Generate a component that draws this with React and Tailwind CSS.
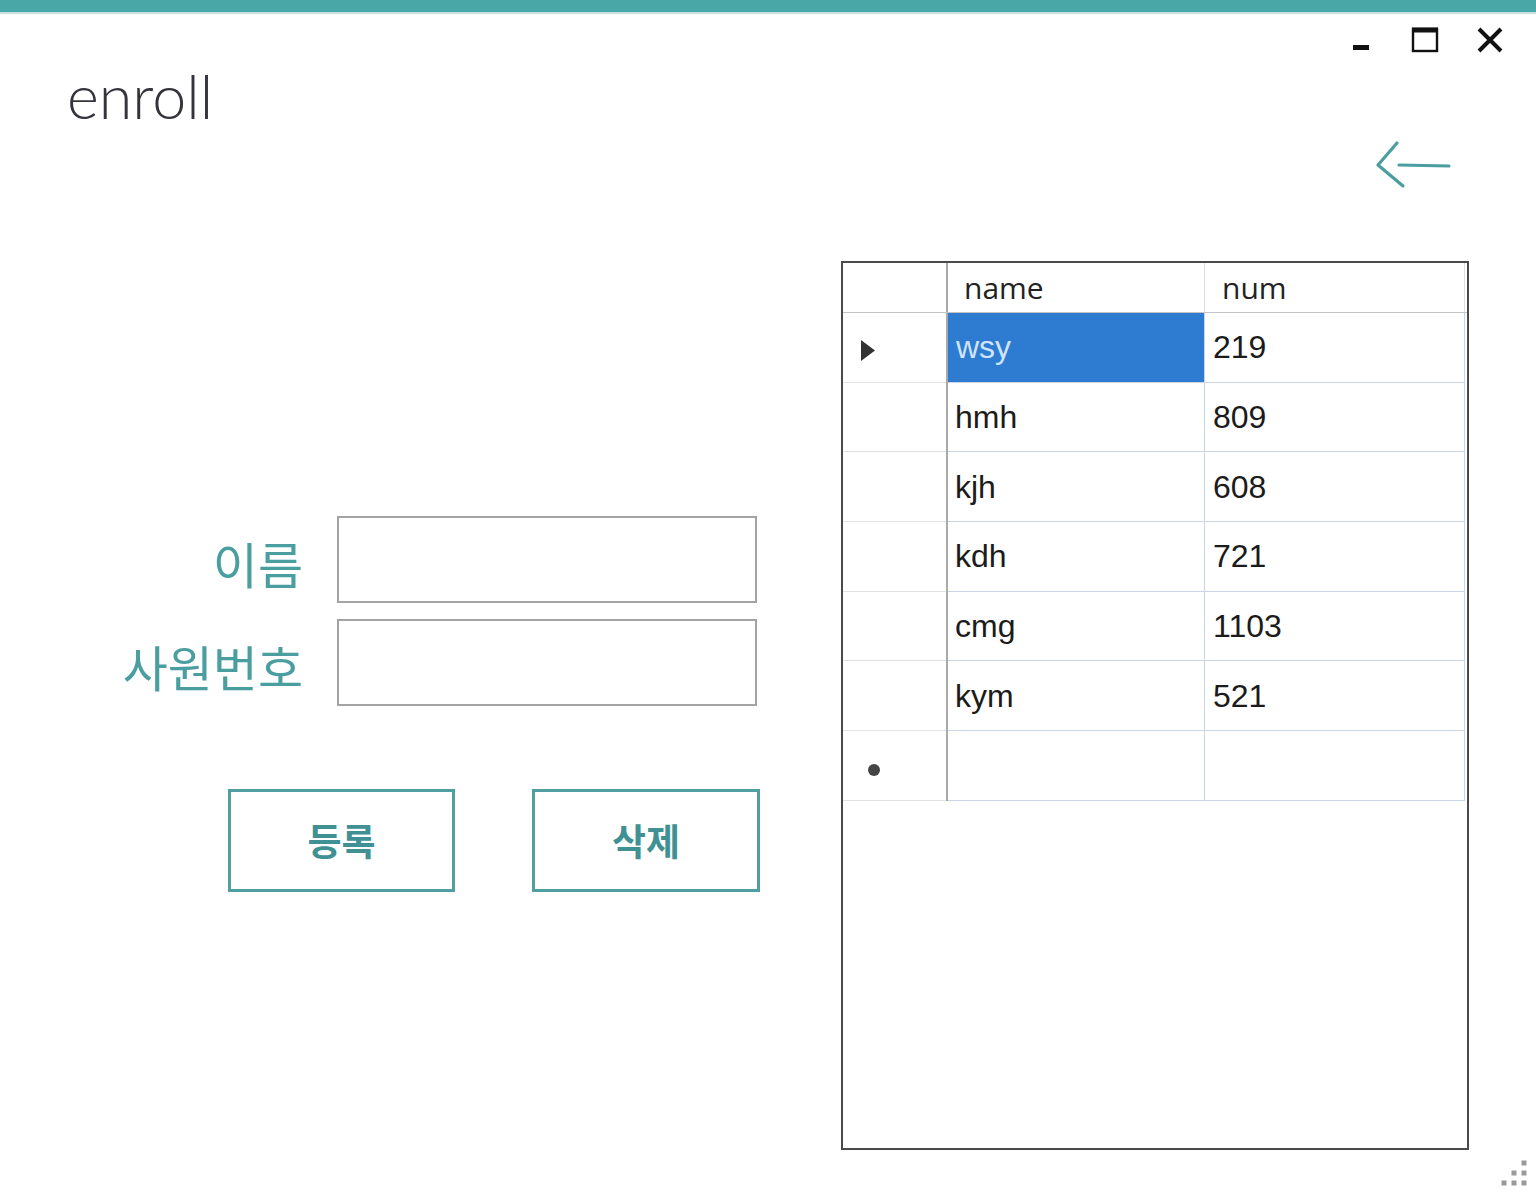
import React from "react";

const rows = [
  { name: "wsy", num: "219", selected: true },
  { name: "hmh", num: "809" },
  { name: "kjh", num: "608" },
  { name: "kdh", num: "721" },
  { name: "cmg", num: "1103" },
  { name: "kym", num: "521" },
  { name: "", num: "", isNew: true },
];

const cellFont = { fontFamily: '"Liberation Sans", Arial, sans-serif' };

function Row({ r }) {
  return (
    <div className="flex h-[69.7px] shrink-0">
      <div className="w-[103px] border-b border-[#e2e2e2] flex items-center pl-[18px]">
        {r.selected && (
          <svg width="14" height="21" viewBox="0 0 14 21" className="mt-[7px]">
            <polygon points="0,0 14,10.5 0,21" fill="#333" />
          </svg>
        )}
        {r.isNew && (
          <svg width="16" height="16" viewBox="0 0 16 16" className="ml-[5px] mt-[10px]">
            <circle cx="8" cy="8" r="6" fill="#444" />
          </svg>
        )}
      </div>
      <div className="w-[2px] bg-[#a9a9a9]" />
      <div className="w-[257px] border-r border-b border-[#c9d5e5] flex items-center">
        {r.selected ? (
          <div className="w-full h-full bg-[#2e7bd2] flex items-center pl-[8px] text-[32px] text-[#cfe4fb]" style={cellFont}>
            {r.name}
          </div>
        ) : (
          <span className="pl-[7px] text-[32px] text-[#1b1b1b]" style={cellFont}>
            {r.name}
          </span>
        )}
      </div>
      <div className="w-[260px] border-r border-b border-[#c9d5e5] flex items-center">
        <span className="pl-[8px] text-[32px] text-[#1b1b1b]" style={cellFont}>
          {r.num}
        </span>
      </div>
    </div>
  );
}

export default function App() {
  return (
    <div className="w-[1536px] h-[1198px] bg-white flex flex-col overflow-hidden">
      <div className="h-[12px] bg-[#4aa7a8] shrink-0" />
      <div className="h-[2px] bg-[#c5e3e3] shrink-0" />

      {/* header */}
      <div className="flex h-[247px] shrink-0">
        <div
          className="pl-[67px] mt-[51px] text-[61px] leading-none text-[#34343c] font-light"
          style={{ fontFamily: 'Lato, "Open Sans", sans-serif' }}
        >
          enroll
        </div>
        <div className="ml-auto flex flex-col items-end">
          <div className="flex mt-[12px] pr-[33px] gap-[36px]">
            <svg width="28" height="28" viewBox="0 0 28 28">
              <rect x="6" y="19" width="16" height="5" fill="#111" />
            </svg>
            <svg width="28" height="28" viewBox="0 0 28 28">
              <rect x="2" y="3" width="24" height="22" fill="none" stroke="#111" strokeWidth="2.4" />
              <rect x="1" y="1.5" width="26" height="5" fill="#111" />
            </svg>
            <svg width="28" height="28" viewBox="0 0 28 28">
              <path d="M4 3 L26 25 M26 3 L4 25" stroke="#111" strokeWidth="4" />
            </svg>
          </div>
          <svg width="86" height="54" viewBox="0 0 86 54" className="mt-[84px] mr-[80px]">
            <path
              d="M27 5 L8 27 L33 48 M29 27 L79 28"
              fill="none"
              stroke="#4a9ea0"
              strokeWidth="3.2"
              strokeLinecap="round"
              strokeLinejoin="round"
            />
          </svg>
        </div>
      </div>

      {/* body */}
      <div className="flex h-[889px] shrink-0">
        <div className="w-[841px] flex flex-col" style={{ fontFamily: '"Noto Sans CJK KR", sans-serif' }}>
          <div className="flex items-center mt-[255px] h-[87px]">
            <div className="w-[303px] text-right text-[49px] leading-none text-[#4a9ea0] pt-[6px]">이름</div>
            <div className="ml-[34px] w-[420px] h-[87px] border-2 border-[#a3a3a3]" />
          </div>
          <div className="flex items-center mt-[16px] h-[87px]">
            <div className="w-[303px] text-right text-[49px] leading-none text-[#4a9ea0] whitespace-nowrap pt-[6px]">사원번호</div>
            <div className="ml-[34px] w-[420px] h-[87px] border-2 border-[#a3a3a3]" />
          </div>
          <div className="flex mt-[83px] pl-[228px] gap-[77px]">
            <div className="w-[227px] h-[103px] border-[3px] border-[#4f9fa0] flex items-center justify-center text-[37px] font-bold text-[#3f9194]">
              등록
            </div>
            <div className="w-[228px] h-[103px] border-[3px] border-[#4f9fa0] flex items-center justify-center text-[37px] font-bold text-[#3f9194]">
              삭제
            </div>
          </div>
        </div>

        <div className="w-[628px] h-full border-[2.5px] border-[#4a4a4a] bg-white flex flex-col">
          <div className="flex h-[50px] shrink-0 border-b border-[#c4c4c4]" style={{ fontFamily: '"Open Sans", sans-serif' }}>
            <div className="w-[103px]" />
            <div className="w-[2px] bg-[#a9a9a9]" />
            <div className="w-[257px] border-r border-[#dedede] flex items-center pl-[16px] text-[30px] text-[#222]">
              name
            </div>
            <div className="w-[260px] border-r border-[#dedede] flex items-center pl-[17px] text-[30px] text-[#222]">
              num
            </div>
          </div>
          {rows.map((r, i) => (
            <Row key={i} r={r} />
          ))}
        </div>
      </div>

      {/* footer with resize grip */}
      <div className="flex-1 flex justify-end pr-[7px] pt-[8px]">
        <svg width="30" height="30" viewBox="0 0 30 30">
          {[
            [25, 5],
            [15, 15],
            [25, 15],
            [5, 25],
            [15, 25],
            [25, 25],
          ].map(([x, y], i) => (
            <rect key={i} x={x - 2.5} y={y - 2.5} width="5" height="5" fill="#9a9a9a" />
          ))}
        </svg>
      </div>
    </div>
  );
}
